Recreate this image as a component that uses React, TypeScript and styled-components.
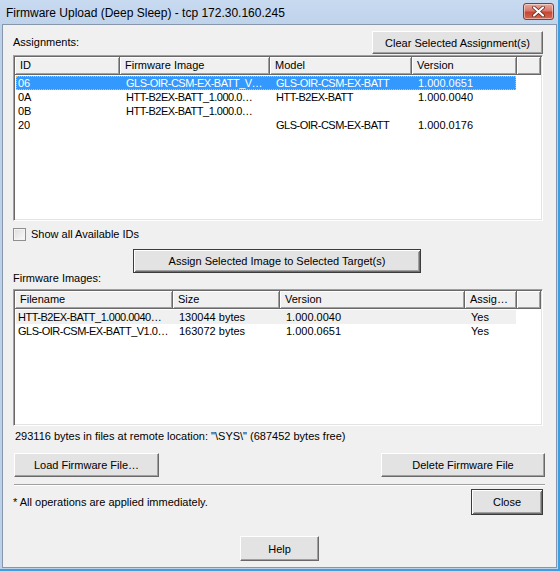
import React from "react";
import styled, { createGlobalStyle, css } from "styled-components";

const Global = createGlobalStyle`
  html, body { margin: 0; padding: 0; background: #ffffff; }
  body {
    width: 560px; height: 571px; overflow: hidden;
    font-family: "Liberation Sans", Arial, sans-serif;
    font-size: 11px; color: #000;
  }
  * { box-sizing: border-box; }
`;

const Window = styled.div`
  width: 560px;
  height: 571px;
  display: flex;
  flex-direction: column;
  background: linear-gradient(#c8daf0, #bcd1ea 30px, #bcd1ea);
  padding-left: 2px;
  border-right: 2px solid #3d9fe0;
  border-bottom: 2px solid #3d9fe0;
`;

const TitleBar = styled.div`
  height: 24px;
  flex: none;
  display: flex;
  align-items: center;
  justify-content: space-between;
  padding: 0 4px 0 4px;
`;

const Title = styled.div`
  font-family: "Liberation Sans", Arial, sans-serif;
  font-size: 12px;
  color: #000;
  padding-top: 1px;
`;

const CloseX = styled.div`
  width: 31px;
  height: 17px;
  margin-top: -2px;
  border-radius: 3px;
  border: 1px solid #8a3a32;
  background: linear-gradient(#e9a99c, #d9786a 45%, #c74634 55%, #d26a52);
  box-shadow: inset 0 0 0 1px rgba(255, 255, 255, 0.45);
  display: flex;
  align-items: center;
  justify-content: center;
`;

const Client = styled.div`
  flex: 1;
  margin: 0 1px 1px 0;
  border: 1px solid #8796aa;
  background: #f0f0f0;
  padding: 6px 13px 0 10px;
  display: flex;
  flex-direction: column;
`;

const Label = styled.div<{ $mt?: number }>`
  line-height: 13px;
  white-space: nowrap;
  margin-top: ${(p) => p.$mt ?? 0}px;
`;

const TopRow = styled.div`
  height: 23px;
  display: flex;
  align-items: center;
  justify-content: space-between;
`;

const Button = styled.div<{ $w: number; $h?: number; $default?: boolean }>`
  width: ${(p) => p.$w}px;
  height: ${(p) => p.$h ?? 23}px;
  flex: none;
  display: flex;
  align-items: center;
  justify-content: center;
  background: #e3e3e3;
  white-space: nowrap;
  ${(p) =>
    p.$default
      ? css`
          border: 1px solid #3c3c3c;
          box-shadow: inset 1px 1px #ffffff, inset -1px -1px #6e6e6e,
            inset 2px 2px #e3e3e3, inset -2px -2px #a0a0a0;
        `
      : css`
          border-top: 1px solid #ffffff;
          border-left: 1px solid #ffffff;
          border-right: 1px solid #696969;
          border-bottom: 1px solid #696969;
          box-shadow: inset -1px -1px #a0a0a0;
        `}
`;

const ListBox = styled.div<{ $h: number; $mt: number }>`
  height: ${(p) => p.$h}px;
  margin-top: ${(p) => p.$mt}px;
  flex: none;
  background: #ffffff;
  border-style: solid;
  border-width: 1px;
  border-color: #a0a0a0 #ffffff #ffffff #a0a0a0;
  box-shadow: inset 1px 1px #696969, inset -1px -1px #e3e3e3;
  padding: 1px;
  display: flex;
  flex-direction: column;
  overflow: hidden;
`;

const HeaderRow = styled.div`
  display: flex;
  height: 18px;
  flex: none;
`;

const HeaderCell = styled.div<{ $w?: number }>`
  ${(p) => (p.$w ? `width: ${p.$w}px; flex: none;` : `flex: 1;`)}
  height: 18px;
  background: #f0f0f0;
  border-right: 1px solid #696969;
  border-bottom: 1px solid #696969;
  box-shadow: inset 1px 1px #ffffff, inset -1px -1px #a0a0a0;
  padding: 0 5px;
  line-height: 17px;
  white-space: nowrap;
  overflow: hidden;
`;

const Rows = styled.div`
  padding-top: 1px;
  display: flex;
  flex-direction: column;
`;

const Row = styled.div<{ $state?: "selected" | "inactive" }>`
  display: flex;
  height: 14px;
  width: 500px;
  margin-left: 1px;
  line-height: 14px;
  ${(p) =>
    p.$state === "selected" &&
    css`
      background: #3399ff;
      color: #ffffff;
      outline: 1px dotted #f2b766;
      outline-offset: -1px;
    `}
  ${(p) =>
    p.$state === "inactive" &&
    css`
      background: #f0f0f0;
    `}
`;

const Cell = styled.div<{ $w: number; $first?: boolean; $tight?: boolean }>`
  width: ${(p) => p.$w}px;
  flex: none;
  padding-left: ${(p) => (p.$first ? 2 : 6)}px;
  letter-spacing: ${(p) => (p.$tight ? "-0.5px" : "0")};
  white-space: nowrap;
  overflow: hidden;
`;

const CheckRow = styled.div`
  margin-top: 7px;
  height: 13px;
  display: flex;
  align-items: center;
  gap: 5px;
`;

const CheckBox = styled.div`
  width: 13px;
  height: 13px;
  border: 1px solid #8e8f8f;
  background: linear-gradient(135deg, #dcdcdc, #fbfbfb);
  box-shadow: inset 0 0 0 1px #f4f4f4;
`;

const AssignWrap = styled.div`
  margin-top: 8px;
  margin-left: 120px;
`;

const Status = styled.div`
  margin-top: 4px;
  padding-left: 2px;
  line-height: 13px;
  white-space: nowrap;
`;

const ButtonRow = styled.div`
  margin-top: 10px;
  margin-left: 1px;
  margin-right: -2px;
  display: flex;
  justify-content: space-between;
`;

const Separator = styled.div`
  margin-top: 7px;
  margin-left: 1px;
  margin-right: -2px;
  height: 2px;
  border-top: 1px solid #a0a0a0;
  border-bottom: 1px solid #ffffff;
`;

const FooterRow = styled.div`
  margin-top: 3px;
  display: flex;
  align-items: center;
  justify-content: space-between;
`;

const HelpWrap = styled.div`
  margin-top: 21px;
  display: flex;
  justify-content: center;
  margin-left: -10px;
  margin-right: -13px;
`;

const cols1 = [105, 150, 142, 105];
const cols2 = [158, 107, 185, 52];

type RowData = { cells: string[]; state?: "selected" | "inactive" };

const assignments: RowData[] = [
  { cells: ["06", "GLS-OIR-CSM-EX-BATT_V…", "GLS-OIR-CSM-EX-BATT", "1.000.0651"], state: "selected" },
  { cells: ["0A", "HTT-B2EX-BATT_1.000.0…", "HTT-B2EX-BATT", "1.000.0040"] },
  { cells: ["0B", "HTT-B2EX-BATT_1.000.0…", "", ""] },
  { cells: ["20", "", "GLS-OIR-CSM-EX-BATT", "1.000.0176"] },
];

const images: RowData[] = [
  { cells: ["HTT-B2EX-BATT_1.000.0040…", "130044 bytes", "1.000.0040", "Yes"], state: "inactive" },
  { cells: ["GLS-OIR-CSM-EX-BATT_V1.0…", "163072 bytes", "1.000.0651", "Yes"] },
];

function ListView({
  h,
  mt,
  cols,
  headers,
  rows,
}: {
  h: number;
  mt: number;
  cols: number[];
  headers: string[];
  rows: RowData[];
}) {
  return (
    <ListBox $h={h} $mt={mt}>
      <HeaderRow>
        {headers.map((t, i) => (
          <HeaderCell key={i} $w={cols[i]}>
            {t}
          </HeaderCell>
        ))}
        <HeaderCell />
      </HeaderRow>
      <Rows>
        {rows.map((r, i) => (
          <Row key={i} $state={r.state}>
            {r.cells.map((c, j) => (
              <Cell
                key={j}
                $w={j === 0 ? cols[j] - 1 : cols[j]}
                $first={j === 0}
                $tight={/[A-Z]{3}/.test(c)}
              >
                {c}
              </Cell>
            ))}
          </Row>
        ))}
      </Rows>
    </ListBox>
  );
}

export default function App() {
  return (
    <>
      <Global />
      <Window>
        <TitleBar>
          <Title>Firmware Upload (Deep Sleep) - tcp 172.30.160.245</Title>
          <CloseX>
            <svg width="13" height="11" viewBox="0 0 13 11">
              <path
                d="M2 1.5 L11 9.5 M11 1.5 L2 9.5"
                stroke="#5a1d16"
                strokeWidth="3.6"
                strokeLinecap="round"
              />
              <path
                d="M2 1.5 L11 9.5 M11 1.5 L2 9.5"
                stroke="#ffffff"
                strokeWidth="2.2"
                strokeLinecap="round"
              />
            </svg>
          </CloseX>
        </TitleBar>
        <Client>
          <TopRow>
            <Label>Assignments:</Label>
            <Button $w={171}>Clear Selected Assignment(s)</Button>
          </TopRow>
          <ListView
            h={166}
            mt={1}
            cols={cols1}
            headers={["ID", "Firmware Image", "Model", "Version"]}
            rows={assignments}
          />
          <CheckRow>
            <CheckBox />
            <Label>Show all Available IDs</Label>
          </CheckRow>
          <AssignWrap>
            <Button $w={288} $h={24} $default>
              Assign Selected Image to Selected Target(s)
            </Button>
          </AssignWrap>
          <Label $mt={-1}>Firmware Images:</Label>
          <ListView
            h={137}
            mt={4}
            cols={cols2}
            headers={["Filename", "Size", "Version", "Assig…"]}
            rows={images}
          />
          <Status>293116 bytes in files at remote location: "\SYS\" (687452 bytes free)</Status>
          <ButtonRow>
            <Button $w={145} $h={24}>Load Firmware File…</Button>
            <Button $w={164} $h={24}>Delete Firmware File</Button>
          </ButtonRow>
          <Separator />
          <FooterRow>
            <Label>* All operations are applied immediately.</Label>
            <Button $w={72} $h={26} $default>
              Close
            </Button>
          </FooterRow>
          <HelpWrap>
            <Button $w={79} $h={25}>Help</Button>
          </HelpWrap>
        </Client>
      </Window>
    </>
  );
}
